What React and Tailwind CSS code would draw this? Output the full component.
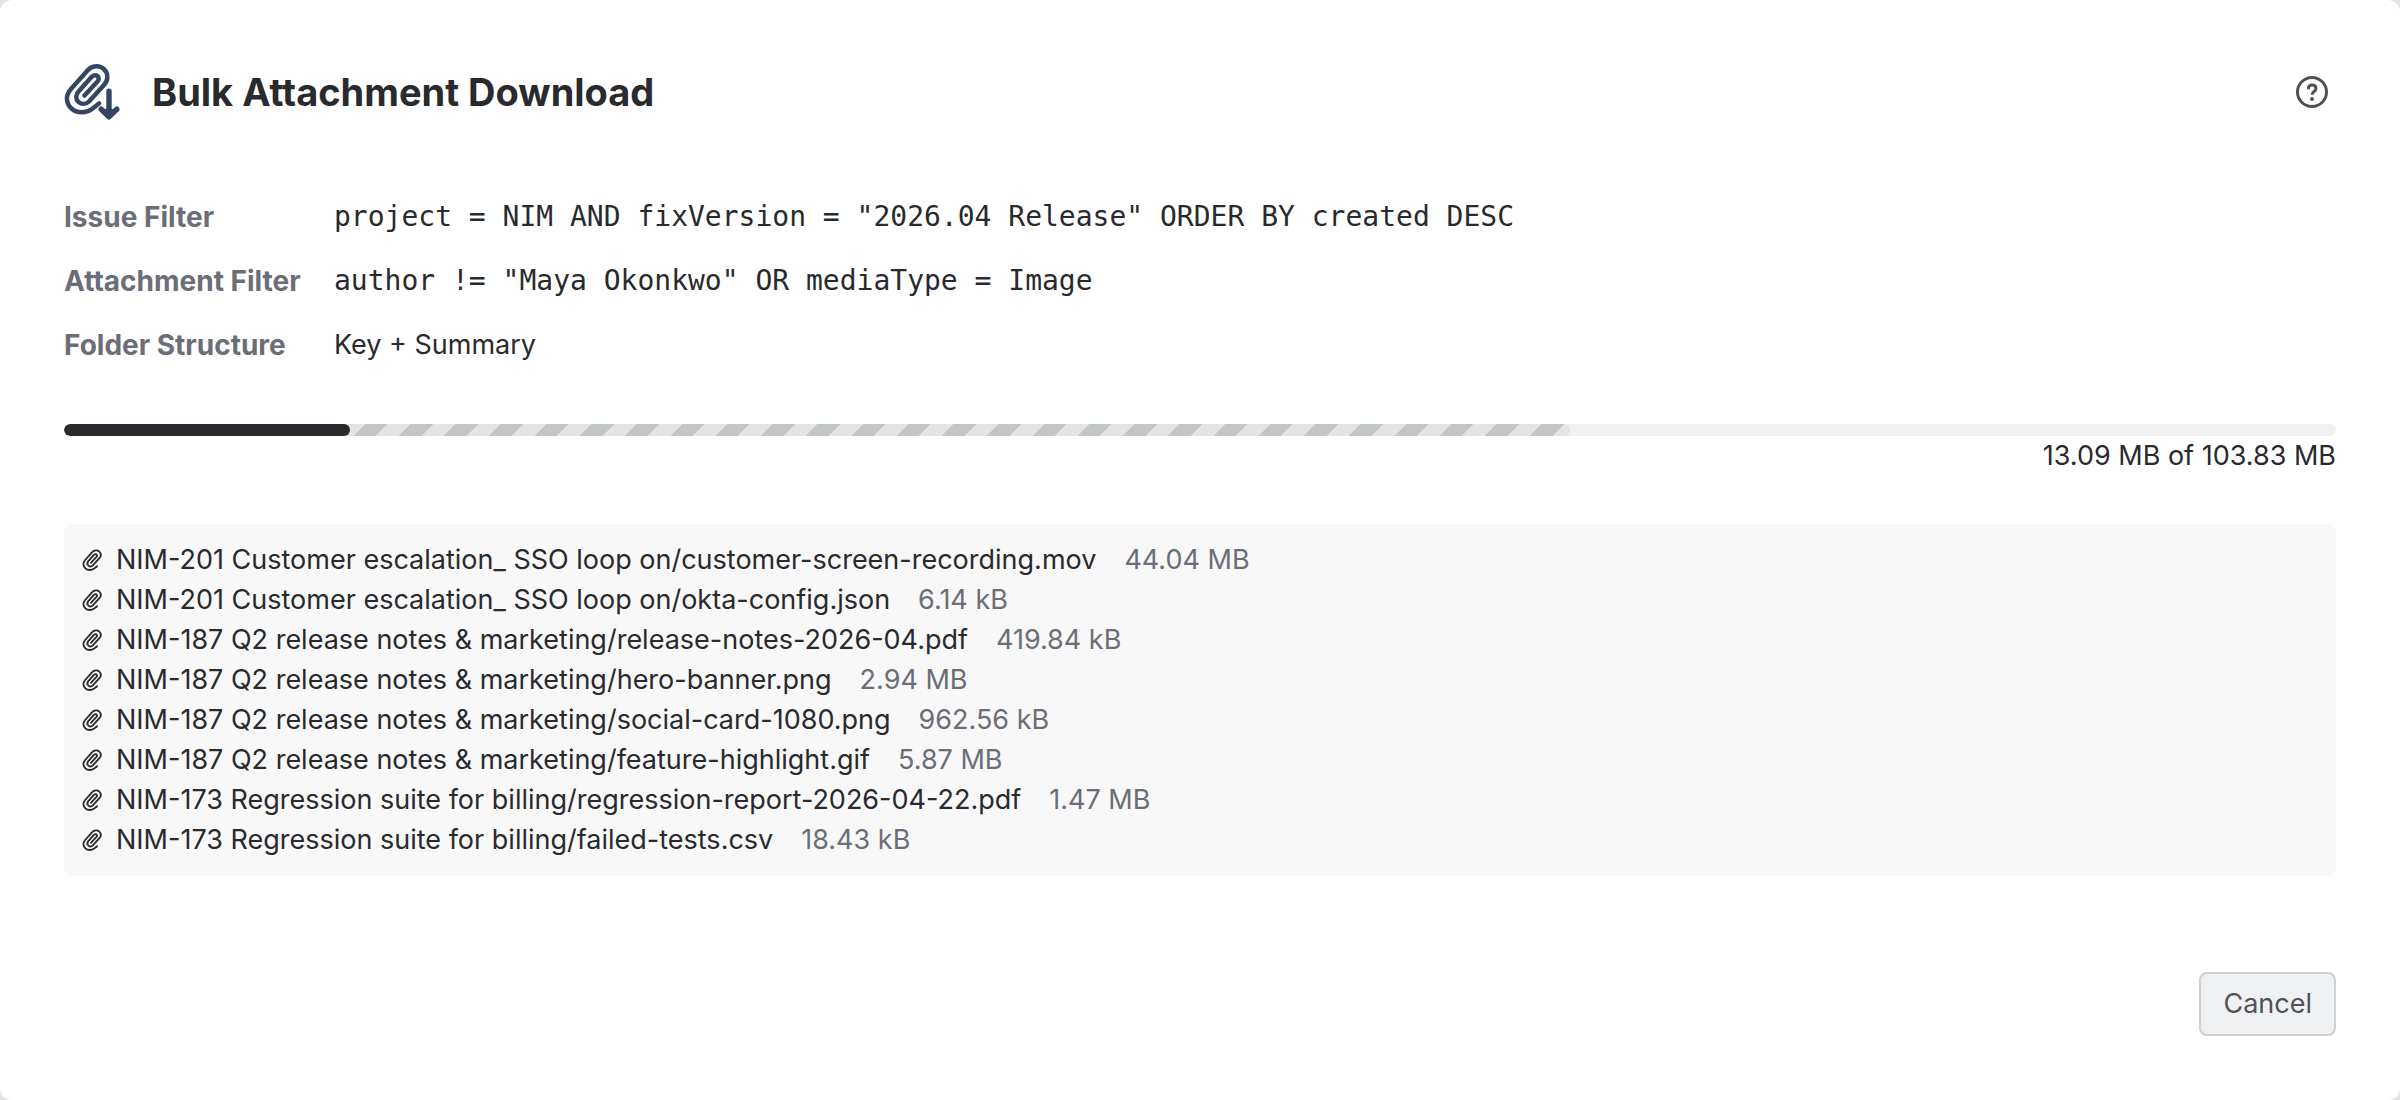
const FILES = [
  { path: "NIM-201 Customer escalation_ SSO loop on/customer-screen-recording.mov", size: "44.04 MB" },
  { path: "NIM-201 Customer escalation_ SSO loop on/okta-config.json", size: "6.14 kB" },
  { path: "NIM-187 Q2 release notes & marketing/release-notes-2026-04.pdf", size: "419.84 kB" },
  { path: "NIM-187 Q2 release notes & marketing/hero-banner.png", size: "2.94 MB" },
  { path: "NIM-187 Q2 release notes & marketing/social-card-1080.png", size: "962.56 kB" },
  { path: "NIM-187 Q2 release notes & marketing/feature-highlight.gif", size: "5.87 MB" },
  { path: "NIM-173 Regression suite for billing/regression-report-2026-04-22.pdf", size: "1.47 MB" },
  { path: "NIM-173 Regression suite for billing/failed-tests.csv", size: "18.43 kB" },
];

const CLIP_PATH =
  "M35 39.5 L28 45 C22 49.5 13 49.5 7.5 44.5 C1.5 39 1.5 31 7 25 L23.5 6.5 C28 1.2 36 1.2 40 5.2 C44.4 9.5 44.4 16 40.2 20.8 L25 37.5 C22 40.5 17.5 40.5 14.5 38 C11.5 35 11.5 31 14.5 27.5 L27.5 13 C32 9 37 13 33.5 17.5 L20.5 31.5";

function AppIcon() {
  return (
    <svg
      viewBox="0 0 56 56"
      className="size-14 shrink-0"
      fill="none"
      stroke="#344563"
      strokeWidth="4.5"
      strokeLinecap="round"
      strokeLinejoin="round"
      aria-hidden="true"
    >
      <path d={CLIP_PATH} />
      <path d="M45 27.3V50M37.2 45.2l7.8 7.6 7.8-7.6" strokeWidth="5.4" />
      <path d="M38 45h14l-7 8z" fill="#344563" stroke="none" />
    </svg>
  );
}

function ClipIcon() {
  return (
    <svg
      viewBox="-5 -3 56 56"
      className="size-6 shrink-0"
      fill="none"
      stroke="currentColor"
      strokeWidth="4.2"
      strokeLinecap="round"
      strokeLinejoin="round"
      aria-hidden="true"
    >
      <path d={CLIP_PATH} />
    </svg>
  );
}

function HelpIcon() {
  return (
    <svg viewBox="0 0 32 32" className="size-8" fill="none" stroke="currentColor" strokeWidth="3" aria-hidden="true">
      <circle cx="16" cy="16" r="14.5" />
      <path d="M12.3 13.2c0-2.6 1.6-4.1 3.9-4.1s3.8 1.4 3.8 3.5c0 2.9-4 3-4 6.2" />
      <circle cx="16" cy="23" r="2" fill="currentColor" stroke="none" />
    </svg>
  );
}

function Detail({ label, mono, children }) {
  return (
    <>
      <dt className="text-[28px] font-bold text-[#6b6e76]">{label}</dt>
      <dd className={mono ? "font-['DejaVu_Sans_Mono',monospace] text-[28px]" : ""}>{children}</dd>
    </>
  );
}

function Progress({ done, total, buffered }) {
  const percent = (done / total) * 100;

  return (
    <div className="mt-[59px]">
      <div
        role="progressbar"
        aria-label="Download progress"
        aria-valuenow={Math.round(percent)}
        className="relative h-3 overflow-hidden rounded-full bg-[#f0f1f2]"
      >
        <div
          className="absolute inset-y-0 left-0 rounded-full bg-[repeating-linear-gradient(135deg,#c3c6c7_0px,#c3c6c7_5px,#e2e3e5_5px,#e2e3e5_21px,#c3c6c7_21px,#c3c6c7_32px)]"
          style={{ width: `${buffered}%` }}
        />
        <div className="absolute inset-y-0 left-0 rounded-full bg-[#292a2e]" style={{ width: `${percent}%` }} />
      </div>
      <p className="text-right">
        {done} MB of {total} MB
      </p>
    </div>
  );
}

export default function App() {
  return (
    <div className="min-h-screen bg-[#e4e4e4]">
      <main className="min-h-screen rounded-xl bg-white p-16 font-['Inter',sans-serif] text-[27px] leading-10 text-[#292a2e]">
        <header className="flex items-center">
          <AppIcon />
          <h1 className="ml-8 text-[38px] leading-14 font-bold">Bulk Attachment Download</h1>
          <button type="button" aria-label="Help" className="ml-auto flex size-12 items-center justify-center text-[#505258]">
            <HelpIcon />
          </button>
        </header>

        <dl className="mt-[77px] grid grid-cols-[238px_1fr] gap-x-8 gap-y-6">
          <Detail label="Issue Filter" mono>
            project = NIM AND fixVersion = "2026.04 Release" ORDER BY created DESC
          </Detail>
          <Detail label="Attachment Filter" mono>
            author != "Maya Okonkwo" OR mediaType = Image
          </Detail>
          <Detail label="Folder Structure">Key + Summary</Detail>
        </dl>

        <Progress done={13.09} total={103.83} buffered={66.3} />

        <ul className="mt-12 rounded-lg bg-[#f8f8f8] p-4">
          {FILES.map((file) => (
            <li key={file.path} className="flex items-center">
              <ClipIcon />
              <span className="ml-3">{file.path}</span>
              <span className="ml-7 text-[#6b6e76]">{file.size}</span>
            </li>
          ))}
        </ul>

        <footer className="mt-24 flex justify-end">
          <button
            type="button"
            className="h-16 rounded-lg border-2 border-[#cfd0d2] bg-[#f0f1f2] px-[22px] text-[#505258]"
          >
            Cancel
          </button>
        </footer>
      </main>
    </div>
  );
}
